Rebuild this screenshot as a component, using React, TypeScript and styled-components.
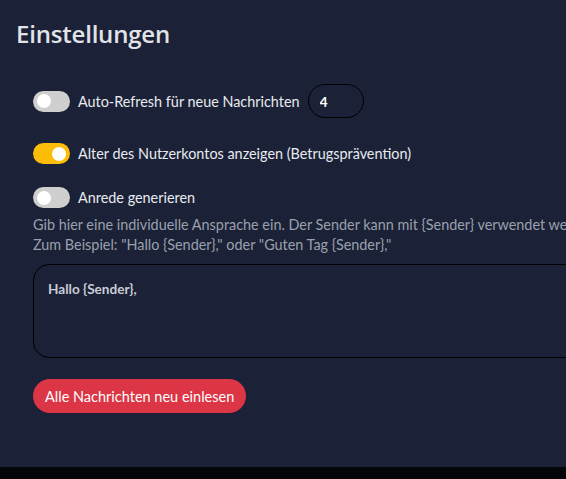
import React, { useState } from "react";
import styled, { createGlobalStyle } from "styled-components";

const Global = createGlobalStyle`
  html, body { margin: 0; padding: 0; background: #030508; overflow: hidden; }
  body { font-family: Lato, "Noto Sans", sans-serif; }
  * { box-sizing: border-box; }
`;

const Panel = styled.div`
  width: 620px;
  height: 467px;
  background: #1b2136;
  padding: 16px 16px 0 16px;
  display: flex;
  flex-direction: column;
  overflow: hidden;
`;

const Header = styled.div`
  display: flex;
  align-items: center;
  justify-content: space-between;
  height: 34px;
`;

const Title = styled.h2`
  margin: 0;
  font-family: "Open Sans", Lato, sans-serif;
  font-size: 24px;
  font-weight: 600;
  color: #e1e3e8;
  letter-spacing: -0.2px;
`;

const Close = styled.button`
  width: 39px;
  height: 24px;
  padding: 0;
  border: none;
  background: transparent;
  color: #8a8f9c;
  font-family: Lato, sans-serif;
  font-size: 20px;
  text-align: left;
  cursor: pointer;
`;

const Body = styled.div`
  padding: 34px 17px 0 17px;
  display: flex;
  flex-direction: column;
`;

const Row = styled.label<{ $mt?: number }>`
  display: flex;
  align-items: center;
  gap: 8px;
  margin-top: ${(p) => p.$mt ?? 0}px;
  color: #e8eaef;
  font-size: 14.4px;
  cursor: pointer;
`;

const Switch = styled.span<{ $on: boolean }>`
  position: relative;
  width: 37px;
  height: 21px;
  border-radius: 11px;
  flex: none;
  background: ${(p) => (p.$on ? "#fbbd08" : "#cfcfcf")};
  &::after {
    content: "";
    position: absolute;
    top: 3.5px;
    left: ${(p) => (p.$on ? "19px" : "4px")};
    width: 14px;
    height: 14px;
    border-radius: 50%;
    background: #ffffff;
  }
`;

const NumberInput = styled.input`
  width: 56px;
  height: 34px;
  margin-left: 0;
  border-radius: 17px;
  border: 1px solid #000;
  background: transparent;
  color: #fff;
  font-family: Lato, sans-serif;
  font-size: 14px;
  font-weight: 700;
  padding: 0 11px;
  outline: none;
`;

const Hint = styled.p`
  margin: 7px 0 0 0;
  color: #9aa0ad;
  font-size: 14.4px;
  line-height: 20px;
  white-space: nowrap;
`;

const TextArea = styled.textarea`
  margin-top: 9px;
  width: 100%;
  height: 94px;
  border-radius: 16px;
  border: 1px solid #000;
  background: transparent;
  color: #c9cdd6;
  font-family: Lato, sans-serif;
  font-size: 13.6px;
  font-weight: 700;
  padding: 16px 14px;
  resize: none;
  outline: none;
`;

const Button = styled.button`
  margin-top: 21px;
  align-self: flex-start;
  height: 34px;
  padding: 0 12px;
  border: none;
  border-radius: 17px;
  background: #dc3545;
  color: #fff;
  font-family: Lato, sans-serif;
  font-size: 14.5px;
  cursor: pointer;
`;

export default function App() {
  const [auto, setAuto] = useState(false);
  const [age, setAge] = useState(true);
  const [greet, setGreet] = useState(false);
  return (
    <>
      <Global />
      <Panel>
        <Header>
          <Title>Einstellungen</Title>
          <Close aria-label="Schließen">×</Close>
        </Header>
        <Body>
          <Row onClick={() => setAuto(!auto)}>
            <Switch $on={auto} />
            Auto-Refresh für neue Nachrichten
            <NumberInput defaultValue="4" onClick={(e) => e.stopPropagation()} />
          </Row>
          <Row $mt={25} onClick={() => setAge(!age)}>
            <Switch $on={age} />
            Alter des Nutzerkontos anzeigen (Betrugsprävention)
          </Row>
          <Row $mt={23} onClick={() => setGreet(!greet)}>
            <Switch $on={greet} />
            Anrede generieren
          </Row>
          <Hint>
            Gib hier eine individuelle Ansprache ein. Der Sender kann mit {"{Sender}"} verwendet werden.
            <br />
            Zum Beispiel: "Hallo {"{Sender}"}," oder "Guten Tag {"{Sender}"},"
          </Hint>
          <TextArea defaultValue="Hallo {Sender}," />
          <Button>Alle Nachrichten neu einlesen</Button>
        </Body>
      </Panel>
    </>
  );
}
